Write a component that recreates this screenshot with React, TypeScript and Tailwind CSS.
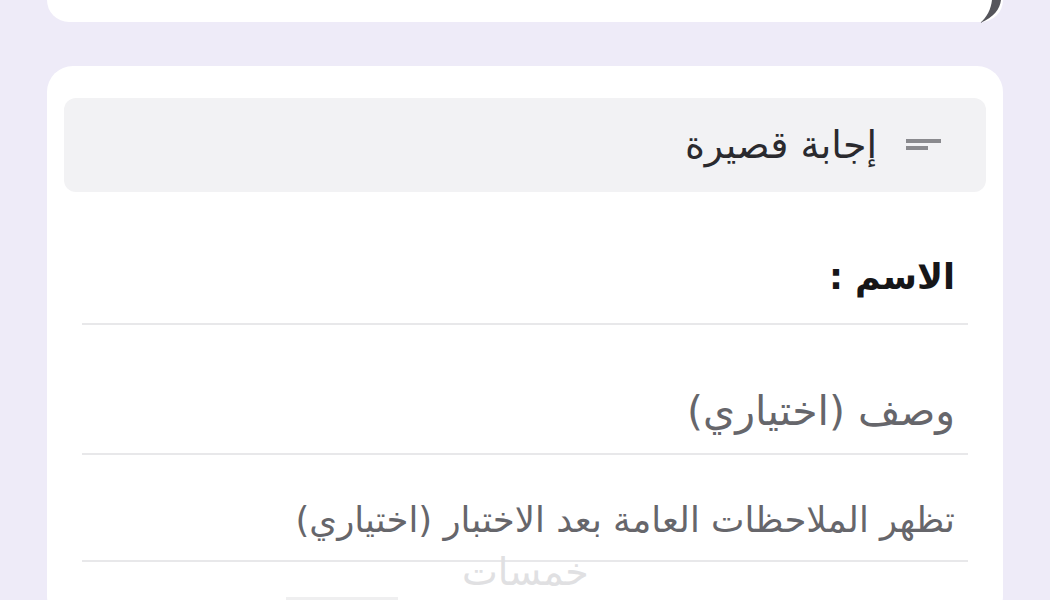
import React from 'react';

const arabic = { fontFamily: '"DejaVu Sans", "Noto Sans", sans-serif' };

function ShortTextIcon() {
  return (
    <svg width="36" height="14" viewBox="0 0 36 14" className="shrink-0">
      <rect x="0" y="1" width="35" height="4" fill="#8a8a8e" />
      <rect x="0" y="8" width="22" height="4" fill="#8a8a8e" />
    </svg>
  );
}

export default function App() {
  return (
    <div className="relative h-[600px] w-[1050px] overflow-hidden bg-[#eeebf8]" style={arabic}>
      {/* previous card, scrolled mostly out of view */}
      <div className="relative mx-[47px] h-[22px] rounded-b-[26px] bg-white">
        <svg className="absolute right-0 top-0" width="26" height="24" viewBox="0 0 26 24">
          <path d="M15 0 L24 0 C23 9 17 17 3 23 C10 17 14 9 15 0 Z" fill="#55555b" />
        </svg>
      </div>

      {/* question card */}
      <div dir="rtl" className="relative mx-[47px] mt-[44px] rounded-[26px] bg-white px-[17px] pt-[32px]">
        <div className="flex h-[94px] items-center gap-[29px] rounded-[12px] bg-[#f2f2f4] pr-[44px]">
          <ShortTextIcon />
          <span className="text-[38px] leading-none text-[#2a2a2e]">إجابة قصيرة</span>
        </div>

        <div className="mx-[18px]">
          <div className="h-[133px] border-b-2 border-[#e8e8ea] px-[13px] pt-[60px]">
            <div className="text-[35px] font-bold leading-[50px] text-[#161618]">الاسم :</div>
          </div>
          <div className="h-[130px] border-b-2 border-[#e8e8ea] px-[13px] pt-[59px]">
            <div className="text-[41px] leading-[54px] text-[#66666b]">وصف (اختياري)</div>
          </div>
          <div className="h-[107px] border-b-2 border-[#e8e8ea] px-[13px] pt-[42px]">
            <div className="text-[35.5px] leading-[46px] text-[#66666b]">تظهر الملاحظات العامة بعد الاختبار (اختياري)</div>
          </div>
          <div className="h-[60px] pt-[35px]">
            <div className="mr-[570px] h-[3px] w-[112px] bg-[#efeff0]" />
          </div>
        </div>
      </div>

      {/* watermark */}
      <div className="absolute left-[462px] top-[553px] text-[38px] leading-none text-[#e0e0e2]">خمسات</div>
    </div>
  );
}
